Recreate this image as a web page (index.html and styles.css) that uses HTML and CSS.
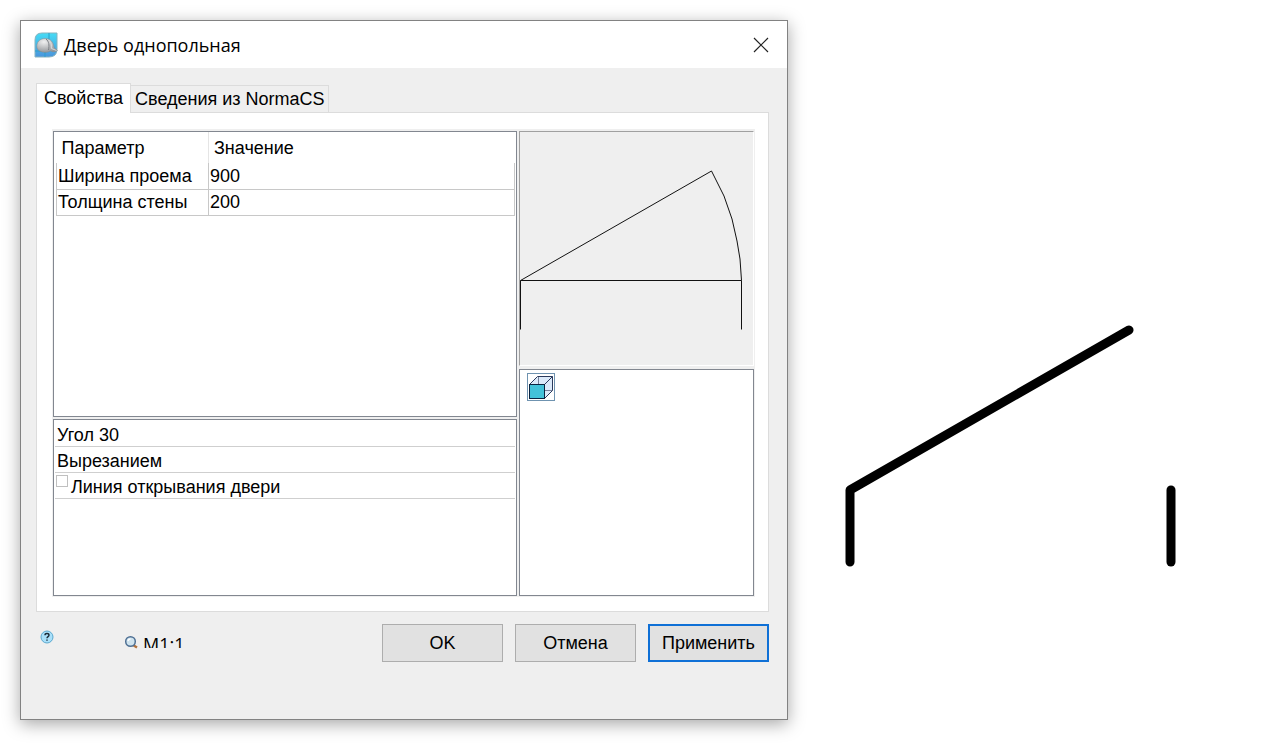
FILE: index.html
```html
<!DOCTYPE html>
<html lang="ru">
<head>
    <meta charset="UTF-8">
    <meta name="viewport" content="width=device-width, initial-scale=1.0">
    <title>Дверь однопольная</title>
    <link rel="stylesheet" href="styles.css">
</head>
<body>
    <div class="dialog" role="dialog" aria-labelledby="dialogTitle">
        <div class="title-bar">
            <svg class="app-icon" width="24" height="26" viewBox="0 0 24 26">
                <defs>
                    <linearGradient id="tile" x1="0" y1="0" x2="0" y2="1">
                        <stop offset="0" stop-color="#45dcf5"/>
                        <stop offset="1" stop-color="#4a94dc"/>
                    </linearGradient>
                    <radialGradient id="helmet" cx="0.35" cy="0.25" r="0.8">
                        <stop offset="0" stop-color="#f0f0f0"/>
                        <stop offset="1" stop-color="#8f9296"/>
                    </radialGradient>
                </defs>
                <path d="M8 1h15v16q0 8-8 8H1V8q0-7 7-7z" fill="url(#tile)" stroke="#86b3bf"/>
                <path d="M15 1v6M11 20v5M1 19h8" stroke="#2b9fcb" fill="none"/>
                <path d="M3 16C2 10 6 6.500 11 6.500c6 0 8.500 4 9 9l3.500 3c-2 2-5 1.500-7 .5-4 2.500-12 1.500-13.500-3z" fill="url(#helmet)" stroke="#85898d" stroke-width="0.5"/>
                <path d="M12 7c3 2.500 3.500 6 2.500 11" stroke="#7d8186" fill="none"/>
                <path d="M15 8c2 2.500 3 5 2.500 8.500l5 2" stroke="#d8d8d8" fill="none"/>
            </svg>
            <h1 class="title" id="dialogTitle">Дверь однопольная</h1>
            <button type="button" class="close-button" aria-label="Закрыть">
                <svg width="16" height="16" viewBox="0 0 16 16">
                    <path d="M1 1l14 14M15 1L1 15" stroke="#222" stroke-width="1.2"/>
                </svg>
            </button>
        </div>

        <div class="dialog-body">
            <div class="tabs" role="tablist">
                <button type="button" class="tab active" role="tab" aria-selected="true">Свойства</button>
                <button type="button" class="tab" role="tab" aria-selected="false">Сведения из NormaCS</button>
            </div>

            <div class="tab-panel" role="tabpanel">
                <div class="frame">
                    <div class="column column-left">
                        <div class="box properties">
                            <table class="property-table">
                                <thead>
                                    <tr>
                                        <th>Параметр</th>
                                        <th>Значение</th>
                                    </tr>
                                </thead>
                                <tbody>
                                    <tr>
                                        <td><label for="doorWidth">Ширина проема</label></td>
                                        <td><input type="text" id="doorWidth" value="900"></td>
                                    </tr>
                                    <tr>
                                        <td><label for="wallWidth">Толщина стены</label></td>
                                        <td><input type="text" id="wallWidth" value="200"></td>
                                    </tr>
                                </tbody>
                            </table>
                        </div>
                        <div class="box options">
                            <div class="option">Угол 30</div>
                            <div class="option">Вырезанием</div>
                            <div class="option option-check">
                                <input type="checkbox" id="openLine">
                                <label for="openLine">Линия открывания двери</label>
                            </div>
                        </div>
                    </div>

                    <div class="column column-right">
                        <div class="preview">
                            <svg width="233" height="233" viewBox="0 0 233 233">
                                <g fill="none" stroke="#111">
                                    <path d="M0.5 148.5L191.5 39L204 64l8 23 5 22 3 18 1.5 21.5"/>
                                    <path d="M0.5 197.5v-49h221v49"/>
                                </g>
                            </svg>
                        </div>
                        <div class="box views">
                            <button type="button" class="view-button" aria-label="Вид спереди">
                                <svg width="26" height="26" viewBox="0 0 26 26">
                                    <path d="M2 10.5L10 2.5h14v14l-8 8z" fill="#dceafa"/>
                                    <path d="M10.5 2.5v14h14M10.5 16.5l-8 8" stroke="#77809a" fill="none"/>
                                    <path d="M1.5 10.5l8-8h15v14l-8 8M16.5 10.5l8-8" stroke="#2b3a5c" fill="none"/>
                                    <rect x="1.5" y="10.5" width="15" height="14" fill="#43c2d9" stroke="#0b2440"/>
                                </svg>
                            </button>
                        </div>
                    </div>
                </div>
            </div>

            <div class="footer">
                <button type="button" class="help-button" aria-label="Справка">
                    <svg width="14" height="14" viewBox="0 0 14 14">
                        <circle cx="7" cy="7" r="6" fill="#a9e0fa" stroke="#5ba9cf"/>
                        <path d="M5 5.2C5 3 9 3 9 5.2 9 6.6 7 6.6 7 8.3M7 9.4v1.4" stroke="#1d2b38" stroke-width="1.4" fill="none"/>
                    </svg>
                </button>
                <button type="button" class="scale-button">
                    <svg width="14" height="14" viewBox="0 0 14 14">
                        <path d="M9 10l4 2.500" stroke="#b0713c" stroke-width="2.4"/>
                        <circle cx="6.500" cy="6.500" r="4.800" fill="#cfe3ee" stroke="#4d6f93" stroke-width="1.5"/>
                        <path d="M4 6Q4.500 4 6.500 4" stroke="#fff" stroke-width="1.5" fill="none"/>
                    </svg>
                    <span class="scale-text">М1:1</span>
                </button>
                <div class="actions">
                    <button type="button" class="button">OK</button>
                    <button type="button" class="button">Отмена</button>
                    <button type="button" class="button button-default">Применить</button>
                </div>
            </div>
        </div>
    </div>

    <!-- Дверь на чертеже -->
    <div class="drawing">
        <svg width="332" height="244" viewBox="0 0 332 244">
            <g fill="none" stroke="#000" stroke-width="9" stroke-linecap="round" stroke-linejoin="round">
                <path d="M6 238v-72L285 6"/>
                <path d="M327 166v72"/>
            </g>
        </svg>
    </div>
</body>
</html>
```

FILE: styles.css
```css
* {
    margin: 0;
    padding: 0;
    box-sizing: border-box;
}

body {
    font-family: 'Liberation Sans', Arial, sans-serif;
    font-size: 18px;
    line-height: 24px;
    color: #000;
    background: #fff;
    min-height: 100vh;
    padding: 20px 0 33px 20px;
    display: flex;
}

button,
input {
    font: inherit;
    color: inherit;
}

button {
    border: none;
    background: none;
}

svg {
    display: block;
}

.dialog {
    width: 60vw;
    min-width: 600px;
    display: flex;
    flex-direction: column;
    background: #efefef;
    border: 1px solid #828282;
    box-shadow: 0 4px 16px rgba(0, 0, 0, 0.35);
}

.title-bar {
    display: flex;
    align-items: center;
    height: 47px;
    padding: 0 18px 0 13px;
    background: #fff;
}

.title {
    flex: 1;
    margin-left: 6px;
    font-family: 'Open Sans', 'Noto Sans', sans-serif;
    font-size: 18px;
    font-weight: normal;
}

/* Вкладки */
.dialog-body {
    padding: 15px 18px 0 15px;
}

.tabs {
    display: flex;
    align-items: flex-end;
}

.tab {
    height: 27px;
    padding: 0 3px 0 4px;
    border: 1px solid #dcdcdc;
    border-left: none;
    border-bottom: none;
}

.tab.active {
    height: 30px;
    margin-bottom: -1px;
    padding: 0 7px 2px;
    border-left: 1px solid #dcdcdc;
    background: #fff;
    position: relative;
}

.tab-panel {
    padding: 16px 13px 14px 15px;
    background: #fff;
    border: 1px solid #dcdcdc;
}

.frame {
    display: flex;
    gap: 2px;
    padding: 2px 1px 1px;
    background: #efefef;
}

.column {
    display: flex;
    flex-direction: column;
}

.column-left {
    flex: 1;
    gap: 2px;
}

.column-right {
    width: 235px;
    gap: 3px;
}

.box {
    background: #fff;
    border: 1px solid #828790;
}

/* Параметры */
.properties {
    min-height: 286px;
    padding: 0 1px 0 2px;
}

.property-table {
    width: 100%;
    border-collapse: collapse;
    table-layout: fixed;
}

.property-table th {
    height: 31px;
    padding: 1px 5px 0;
    font-weight: normal;
    text-align: left;
}

.property-table th:first-child {
    width: 152px;
    border-right: 1px solid #e5e5e5;
}

.property-table td {
    height: 26px;
    padding: 0 1px;
    border: 1px solid #c8c8c8;
    border-top: none;
}

.property-table input {
    display: block;
    width: 100%;
    height: 24px;
    border: none;
    outline: none;
    background: transparent;
}

.property-table label {
    display: block;
}

.options {
    flex: 1;
    min-height: 177px;
    padding: 1px;
}

.option {
    height: 26px;
    padding: 2px 2px 0;
    line-height: 24px;
    border-bottom: 1px solid #cfcfcf;
}

.option-check {
    display: flex;
    gap: 3px;
    padding-left: 1px;
}

.option-check input {
    appearance: none;
    width: 12px;
    height: 12px;
    border: 1px solid #c0c0c0;
    background: #fff;
}

/* Просмотр */
.preview {
    height: 235px;
    border: 1px solid;
    border-color: #a0a0a0 #fff #fff #a0a0a0;
}

.views {
    flex: 1;
    padding: 3px 7px;
}

.view-button {
    border: 1px solid #6f93b0;
    background: #fff;
}

/* Нижняя панель */
.footer {
    display: flex;
    align-items: flex-start;
    padding-top: 12px;
}

.help-button {
    margin: 6px 0 0 4px;
}

.scale-button {
    display: flex;
    align-items: center;
    height: 14px;
    margin: 11px 0 0 70px;
    gap: 5px;
}

.scale-text {
    height: 12px;
    overflow: hidden;
    font-family: 'Open Sans', 'Noto Sans', sans-serif;
    line-height: 16px;
}

.actions {
    display: flex;
    gap: 12px;
    margin-left: auto;
}

.button {
    width: 121px;
    height: 38px;
    background: #e1e1e1;
    border: 1px solid #adadad;
}

.button-default {
    border: 2px solid #0f70d6;
}

.drawing {
    flex: 1;
    padding: 304px 0 0 56px;
}
```
